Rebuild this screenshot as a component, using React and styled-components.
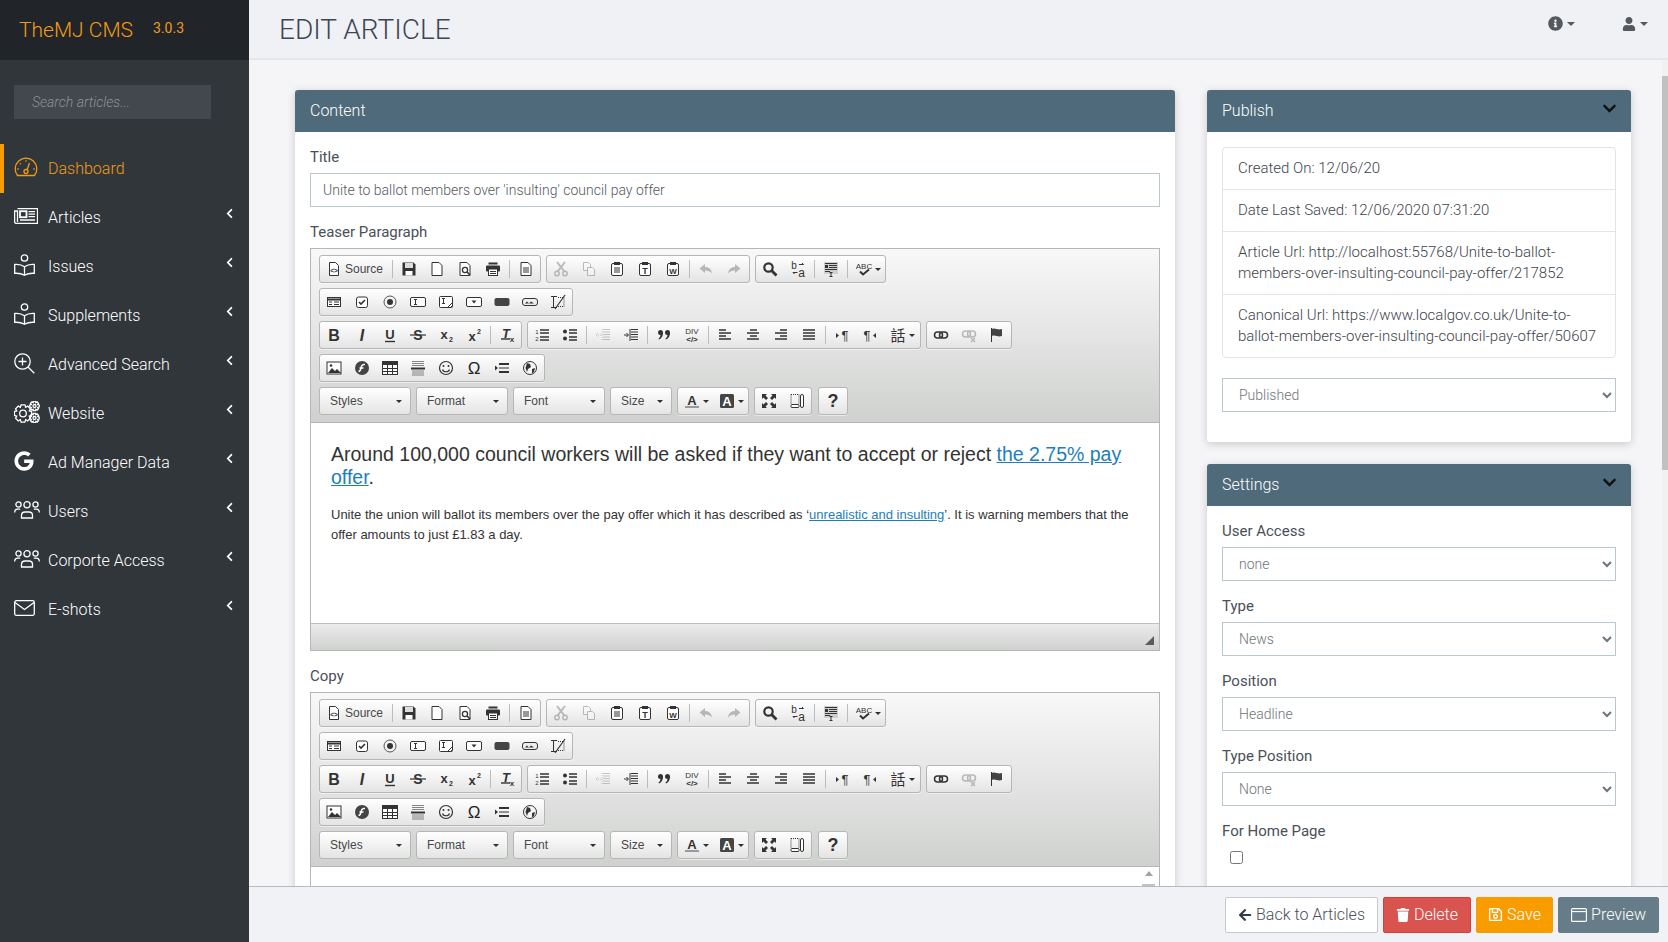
import React from "react";
import styled, { createGlobalStyle } from "styled-components";
import { FaChevronLeft, FaChevronDown, FaGoogle, FaInfoCircle, FaUser, FaArrowLeft, FaTrash, FaRegSave } from "react-icons/fa";

const GlobalStyle = createGlobalStyle`
  html, body { margin: 0; height: 100%; overflow: hidden; }
  body { font-family: Roboto, "Liberation Sans", sans-serif; background: #f5f5f8; color: #495057; }
  * { box-sizing: border-box; }
`;

const gearPath = (cx, cy, outer, inner, teeth) => {
  const step = (Math.PI * 2) / teeth;
  const pts = [];
  for (let t = 0; t < teeth; t++) {
    const a = t * step;
    [[inner, -0.5], [outer, -0.28], [outer, 0.28], [inner, 0.5]].forEach(([r, f]) => {
      pts.push(`${(cx + r * Math.cos(a + f * step)).toFixed(2)} ${(cy + r * Math.sin(a + f * step)).toFixed(2)}`);
    });
  }
  return `M${pts.join("L")}Z`;
};

const NavSvg = styled.svg`
  display: block;
  fill: none;
  stroke: currentColor;
  stroke-width: 1.3;
`;

const Gauge = () => (
  <NavSvg width="24" height="20" viewBox="0 0 24 20">
    <path d="M3.500 18.500A10.800 10.800 0 1 1 20.500 18.500Z" />
    <circle cx="12" cy="14.500" r="2" />
    <path d="M13 13l2.500-7" />
    <path d="M12 3.500v1M6 6.500l.7.7M3.500 12h1M19.500 12h1" strokeWidth="1.800" />
  </NavSvg>
);
const Newspaper = () => (
  <NavSvg width="24" height="16" viewBox="0 0 24 16">
    <path d="M3.500.7h20v14.600H2C1 15.300.6 14.500.6 13.500V3h2.900v11" />
    <rect x="6" y="3.200" width="6.500" height="6" strokeWidth="1.800" />
    <path d="M14.500 3.700h6.500M14.500 6.200h6.500M14.500 8.700h6.500M6 12h15" />
  </NavSvg>
);
const BookReader = () => (
  <NavSvg width="21" height="22" viewBox="0 0 21 22">
    <circle cx="10.500" cy="4" r="3.200" />
    <path d="M.7 10.500c3.500-.3 7 .2 9.800 2.300 2.800-2.100 6.300-2.600 9.800-2.300v8.800c-3.500-.2-7 .3-9.800 2-2.800-1.700-6.300-2.200-9.800-2zM10.500 12.800v8.500" />
  </NavSvg>
);
const SearchPlus = () => (
  <NavSvg width="21" height="21" viewBox="0 0 21 21">
    <circle cx="8.500" cy="8.500" r="7.700" />
    <path d="M8.500 4.500v8M4.500 8.500h8M14 14l6.300 6.300" />
  </NavSvg>
);
const Cogs = () => (
  <NavSvg width="26" height="22" viewBox="0 0 26 22" strokeWidth="1.200">
    <path d={gearPath(9, 12.500, 8.800, 6.800, 8)} />
    <circle cx="9" cy="12.500" r="3.300" />
    <path d={gearPath(20.500, 5, 4.800, 3.500, 8)} />
    <circle cx="20.500" cy="5" r="1.500" />
    <path d={gearPath(20.500, 17, 4.800, 3.500, 8)} />
    <circle cx="20.500" cy="17" r="1.500" />
  </NavSvg>
);
const Users = () => (
  <NavSvg width="26" height="18" viewBox="0 0 26 18">
    <circle cx="4.500" cy="3.500" r="2.600" />
    <circle cx="13" cy="3.800" r="3.100" />
    <circle cx="21.500" cy="3.500" r="2.600" />
    <path d="M7.500 17v-2.500c0-2 1.500-3.500 3.500-3.500h4c2 0 3.500 1.500 3.500 3.500V17zM.7 11.500c0-2 1.300-3.300 3-3.300h2.500M25.300 11.500c0-2-1.300-3.300-3-3.300h-2.500" />
  </NavSvg>
);
const Mail = () => (
  <NavSvg width="21" height="16" viewBox="0 0 21 16">
    <rect x=".7" y=".7" width="19.600" height="14.600" rx="1.500" />
    <path d="M1 2.500l9.500 7 9.500-7" />
  </NavSvg>
);
const Google = () => <FaGoogle size={20} />;

const navItems = [
  { label: "Dashboard", icon: Gauge, active: true },
  { label: "Articles", icon: Newspaper },
  { label: "Issues", icon: BookReader },
  { label: "Supplements", icon: BookReader },
  { label: "Advanced Search", icon: SearchPlus },
  { label: "Website", icon: Cogs },
  { label: "Ad Manager Data", icon: Google },
  { label: "Users", icon: Users },
  { label: "Corporte Access", icon: Users },
  { label: "E-shots", icon: Mail },
];

const Shell = styled.div`
  display: flex;
  height: 100vh;
`;

const Sidebar = styled.aside`
  width: 249px;
  flex-shrink: 0;
  background: #31363b;
`;

const Brand = styled.div`
  height: 60px;
  background: #212529;
  color: #f39c12;
  display: flex;
  align-items: center;
  padding-left: 19px;
  font-size: 21px;
  font-weight: 300;
  span {
    font-size: 14px;
    margin-left: 20px;
    margin-bottom: 4px;
    font-weight: 400;
  }
`;

const SearchWrap = styled.div`
  padding: 25px 14px;
`;

const SearchInput = styled.input`
  width: 197px;
  height: 34px;
  border: 0;
  background: #43474e;
  padding: 0 18px;
  font: italic 300 14px Roboto, sans-serif;
  color: #ccc;
  outline: 0;
  &::placeholder { color: #8f9399; opacity: 1; }
`;

const NavItem = styled.div`
  height: 49px;
  display: flex;
  align-items: center;
  padding-left: 14px;
  font-size: 16px;
  font-weight: 300;
  color: ${(p) => (p.$active ? "#f39c12" : "#fff")};
  box-shadow: ${(p) => (p.$active ? "inset 4px 0 0 #f89c00" : "none")};
`;

const NavIcon = styled.span`
  width: 34px;
  display: flex;
  align-items: center;
  margin-bottom: 3px;
`;

const NavLabel = styled.span`
  flex: 1;
`;

const NavCaret = styled.span`
  margin-right: 14px;
  margin-bottom: 8px;
  display: flex;
`;

const Main = styled.div`
  flex: 1;
  min-width: 0;
  display: flex;
  flex-direction: column;
`;

const TopBar = styled.header`
  height: 60px;
  flex-shrink: 0;
  background: #f0f1f5;
  border-bottom: 2px solid #e6e7eb;
  display: flex;
  align-items: center;
  padding-left: 30px;
`;

const PageTitle = styled.h1`
  margin: 0;
  flex: 1;
  font-size: 28px;
  font-weight: 300;
  color: #3c4654;
  text-transform: uppercase;
`;

const TopAction = styled.div`
  display: flex;
  align-items: center;
  gap: 4px;
  color: #55595e;
  margin-right: ${(p) => p.$mr}px;
  margin-bottom: 11px;
`;

const Caret = styled.span`
  width: 0;
  height: 0;
  border-left: 4.5px solid transparent;
  border-right: 4.5px solid transparent;
  border-top: 4.5px solid currentColor;
`;

const Scroller = styled.div`
  flex: 1;
  min-height: 0;
  overflow: hidden;
  position: relative;
  display: grid;
  grid-template-columns: 880px 424px;
  column-gap: 32px;
  align-items: start;
  padding: 30px 0 0 46px;
`;

const ScrollTrack = styled.div`
  position: absolute;
  top: 0;
  right: 0;
  bottom: 0;
  width: 6px;
  background: #f1f1f1;
`;

const ScrollThumb = styled.div`
  margin-top: 16px;
  height: 394px;
  background: #c1c1c1;
`;

const Column = styled.div`
  display: flex;
  flex-direction: column;
  gap: 22px;
`;

const Card = styled.section`
  background: #fff;
  border-radius: 3px;
  box-shadow: 0 2px 8px rgba(0, 0, 0, 0.18);
`;

const CardHead = styled.div`
  height: 42px;
  background: #4e6a7b;
  border-radius: 3px 3px 0 0;
  color: #fff;
  font-size: 16px;
  font-weight: 300;
  padding: 0 15px 2px;
  display: flex;
  align-items: center;
  justify-content: space-between;
  svg { color: #111; margin-bottom: 4px; margin-right: -1px; }
`;

const CardBody = styled.div`
  padding: 15px;
  padding-bottom: ${(p) => p.$pb ?? 15}px;
`;

const Label = styled.label`
  display: block;
  font-size: 15px;
  line-height: 21px;
  color: #495057;
  margin-bottom: 5px;
`;

const Field = styled.div`
  margin-bottom: 15px;
`;

const TextInput = styled.input`
  display: block;
  width: 100%;
  height: 34px;
  border: 1px solid #b9c8ce;
  padding: 0 12px;
  font: 300 14px Roboto, sans-serif;
  color: #55595e;
  outline: 0;
`;

const Select = styled.select`
  display: block;
  width: 100%;
  height: 34px;
  border: 1px solid #b9c8ce;
  border-radius: 0;
  background: #fff;
  padding: 0 12px;
  font: 300 14px Roboto, sans-serif;
  color: #6f7479;
  outline: 0;
`;

const Check = styled.input`
  display: block;
  margin: 9px 0 0 8px;
  width: 13px;
  height: 13px;
`;

const InfoList = styled.div`
  border: 1px solid #e2e4e8;
  border-radius: 4px;
  margin-bottom: 20px;
`;

const InfoRow = styled.div`
  padding: 10px 15px;
  font-size: 15px;
  font-weight: 300;
  line-height: 21px;
  color: #3d444b;
  border-top: ${(p) => (p.$first ? "0" : "1px solid #e2e4e8")};
`;

const Footer = styled.footer`
  height: 56px;
  flex-shrink: 0;
  background: #f1f2f6;
  border-top: 1px solid #b9b9c6;
  display: flex;
  align-items: center;
  justify-content: flex-end;
  gap: 5px;
  padding: 0 9px 0 0;
`;

const ActionButton = styled.button`
  width: ${(p) => p.$w}px;
  height: 36px;
  border: 1px solid ${(p) => p.$border};
  border-radius: 2px;
  background: ${(p) => p.$bg};
  color: ${(p) => p.$color};
  font: 300 16px Roboto, sans-serif;
  padding: 0;
  display: flex;
  align-items: center;
  justify-content: center;
  gap: 4px;
`;

const WindowIcon = () => (
  <svg width="16" height="14" viewBox="0 0 16 14" fill="none" stroke="currentColor" strokeWidth="1.100">
    <rect x=".6" y=".6" width="14.800" height="12.800" rx="1" />
    <path d="M.6 3.600h14.800" />
  </svg>
);

/* ---- editor ---- */

const Editor = styled.div`
  border: 1px solid #b6b6b6;
  border-bottom-color: ${(p) => (p.$open ? "transparent" : "#b6b6b6")};
  margin-bottom: 15px;
`;

const Toolbar = styled.div`
  background: linear-gradient(#f8f8f8, #cfd1cf);
  border-bottom: 1px solid #b6b6b6;
  padding: 6px 8px 7px;
  display: flex;
  flex-direction: column;
  gap: 5px;
`;

const ToolRow = styled.div`
  display: flex;
  gap: 5px;
`;

const ToolGroup = styled.div`
  display: flex;
  align-items: center;
  height: 28px;
  margin-left: ${(p) => p.$ml || 0}px;
  border: 1px solid #b6b6b6;
  border-radius: 3px;
  background: linear-gradient(#fff, #e4e4e4);
  box-shadow: 0 1px 0 rgba(255, 255, 255, 0.5);
`;

const ToolBtn = styled.span`
  width: ${(p) => p.$w || 28}px;
  height: 26px;
  display: flex;
  align-items: center;
  padding-left: 6px;
  opacity: ${(p) => (p.$off ? 0.3 : 1)};
  font: 12px "Liberation Sans", Arial, sans-serif;
  color: #484848;
  gap: 3px;
  svg { flex-shrink: 0; display: block; }
`;

const ToolSep = styled.span`
  width: 1px;
  height: 18px;
  margin: 0 2px;
  background: #bcbcbc;
`;

const Combo = styled.span`
  width: ${(p) => p.$w}px;
  height: 28px;
  display: flex;
  align-items: center;
  justify-content: space-between;
  padding: 0 8px 0 10px;
  border: 1px solid #b6b6b6;
  border-radius: 3px;
  background: linear-gradient(#fff, #e4e4e4);
  font: 12px "Liberation Sans", Arial, sans-serif;
  color: #484848;
`;

const MiniCaret = styled.span`
  width: 0;
  height: 0;
  border-left: 3px solid transparent;
  border-right: 3px solid transparent;
  border-top: 3px solid #2f2f2f;
`;

const Contents = styled.div`
  height: 200px;
  background: #fff;
  padding: 20px 20px 0;
  font-family: "Liberation Sans", Arial, sans-serif;
  color: #333;
  a { color: #1c7ebb; text-decoration: underline; }
`;

const Lead = styled.p`
  margin: 0 0 16px;
  font-size: 19.5px;
  line-height: 23px;
`;

const Body = styled.p`
  margin: 0;
  font-size: 13px;
  line-height: 20px;
`;

const EditorBottom = styled.div`
  height: 27px;
  background: linear-gradient(#ebebeb, #cfd1cf);
  border-top: 1px solid #bfbfbf;
  display: flex;
  justify-content: flex-end;
  align-items: flex-end;
  padding: 0 5px 5px 0;
`;

const ResizeGrip = styled.span`
  width: 0;
  height: 0;
  border-left: 9px solid transparent;
  border-bottom: 9px solid #5c5c5c;
`;

const ClippedContents = styled.div`
  height: 60px;
  background: #fff;
  display: flex;
  justify-content: flex-end;
  padding: 4px 3px 0 0;
`;

const EditorScroll = styled.div`
  width: 15px;
  display: flex;
  flex-direction: column;
  align-items: center;
  gap: 8px;
  i {
    width: 0;
    height: 0;
    border-left: 4px solid transparent;
    border-right: 4px solid transparent;
    border-bottom: 5px solid #a3a3a3;
  }
  b { width: 13px; height: 40px; background: #c1c1c1; }
`;

const K = "#333";
const Glyph = ({ children }) => (
  <svg width="16" height="16" viewBox="0 0 16 16">{children}</svg>
);
const T = ({ x = 8, y = 13, s = 14, w = 700, i, f = K, c }) => (
  <text x={x} y={y} fontSize={s} fontWeight={w} fontStyle={i ? "italic" : "normal"} fill={f} textAnchor="middle" fontFamily="Liberation Sans, sans-serif">{c}</text>
);
const Lines = ({ rows, x = 2, w = 12, sw = 1.4, c = K }) => (
  <path d={rows.map((r) => `M${r[1] ?? x} ${r[0]}h${r[2] ?? w}`).join("")} stroke={c} strokeWidth={sw} fill="none" />
);
const Page = () => <path d="M3.5 1.5h6l3 3v10h-9z" fill="#fff" stroke={K} />;
const Clip = () => (
  <>
    <rect x="2.5" y="2.5" width="11" height="12" rx="1.5" fill="#fff" stroke={K} />
    <rect x="5" y="1" width="6" height="3" fill={K} />
  </>
);
const QuoteMark = ({ x }) => (
  <g transform={`translate(${x} 0)`} fill={K}>
    <circle cx="2.500" cy="5.500" r="2.500" />
    <path d="M5 5.500c0 3.500-1.500 6-4 7l-.5-1c1.500-1 2-2.500 2-4z" />
  </g>
);

const icons = {
  source: <Glyph><Page /><T y={11.5} s={6.5} c="<>" /></Glyph>,
  save: <Glyph><path d="M1.5 1.5h11l2 2v11h-13z" fill={K} /><rect x="4" y="2" width="8" height="5" fill="#ddd" /><rect x="4.5" y="10" width="7" height="4.5" fill="#fff" /></Glyph>,
  newpage: <Glyph><path d="M3 1.5h7l3 3v10H3z" fill="#fff" stroke={K} /></Glyph>,
  preview: <Glyph><path d="M3 1.5h7l3 3v10H3z" fill="#fff" stroke={K} /><circle cx="8" cy="9" r="2.6" fill="none" stroke={K} strokeWidth="1.3" /><path d="M10 11l3 3" stroke={K} strokeWidth="1.6" /></Glyph>,
  print: <Glyph><rect x="3.5" y="1.5" width="9" height="2" fill={K} /><rect x="1" y="4.5" width="14" height="6" rx="1" fill={K} /><rect x="3.5" y="8" width="9" height="6.5" fill="#fff" stroke={K} /><Lines rows={[[10.5, 5, 6], [12.5, 5, 6]]} sw={1} /></Glyph>,
  templates: <Glyph><path d="M3 1.5h7l3 3v10H3z" fill="#fff" stroke={K} /><Lines rows={[[7, 5, 6], [9, 5, 6], [11, 5, 6]]} sw={1} /></Glyph>,
  cut: <Glyph><path d="M4 1l7 9M12 1l-7 9" stroke={K} strokeWidth="2" /><circle cx="4" cy="12.5" r="2.2" fill="none" stroke={K} strokeWidth="1.4" /><circle cx="12" cy="12.5" r="2.2" fill="none" stroke={K} strokeWidth="1.4" /></Glyph>,
  copy: <Glyph><path d="M2.5 1.5h5l2 2v6h-7z" fill="#fff" stroke={K} /><path d="M6.5 6.5h5l2 2v6h-7z" fill="#fff" stroke={K} /></Glyph>,
  paste: <Glyph><Clip /><Lines rows={[[7, 5, 6], [9, 5, 6], [11, 5, 6]]} sw={1} /></Glyph>,
  pastetext: <Glyph><Clip /><T y={13} s={9} c="T" /></Glyph>,
  pasteword: <Glyph><Clip /><T y={13} s={8} c="W" /></Glyph>,
  undo: <Glyph><path d="M7 3L1.5 7.5 7 12V9.5c3 0 5 .8 7 3-.5-4-3-6.500-7-6.500z" fill={K} /></Glyph>,
  redo: <Glyph><path d="M9 3l5.500 4.500L9 12V9.500c-3 0-5 .8-7 3 .5-4 3-6.500 7-6.500z" fill={K} /></Glyph>,
  find: <Glyph><circle cx="6.500" cy="6.500" r="4.200" fill="none" stroke={K} strokeWidth="2.200" /><path d="M9.500 9.500l5 5" stroke={K} strokeWidth="2.800" /></Glyph>,
  replace: <Glyph><T x={4} y={8} s={10} w={400} c="b" /><T x={11.500} y={15.500} s={12} w={400} c="a" /><path d="M9 3.500h4.500l-1.500-1.500M7.500 11.500H3l1.500 1.500" stroke={K} fill="none" /></Glyph>,
  selectall: <Glyph><rect x="1" y="1" width="14" height="12" fill="#d0d0d0" /><Lines rows={[[2.500, 2, 12], [4.500, 6, 8], [6.500, 6, 8], [8.500, 2, 12], [10.500, 2, 5]]} sw={1} /><rect x="2" y="4" width="3" height="3" fill={K} /><path d="M8 11.500v4M6.500 11.500h3M6.500 15.500h3" stroke={K} /></Glyph>,
  spell: <Glyph><T y={7.500} s={8} w={400} c="ABC" /><path d="M4 10.500l3 3 6-5" stroke={K} strokeWidth="2" fill="none" /></Glyph>,
  form: <Glyph><rect x="1.500" y="3.500" width="13" height="9" fill="#fff" stroke={K} /><Lines rows={[[5.500, 1.500, 13]]} sw={2} /><Lines rows={[[8, 3, 3], [8, 8, 5], [10.500, 3, 3], [10.500, 8, 5]]} sw={1.100} /></Glyph>,
  checkbox: <Glyph><rect x="2.500" y="3" width="11" height="10.500" rx="2" fill="#fff" stroke={K} /><path d="M5 8l2 2 4-4" stroke={K} strokeWidth="1.600" fill="none" /></Glyph>,
  radio: <Glyph><circle cx="8" cy="8" r="6" fill="#f4f4f4" stroke="#555" /><circle cx="8" cy="8" r="3" fill={K} /></Glyph>,
  textfield: <Glyph><rect x="0.500" y="3.500" width="15" height="9" rx="1.500" fill="#fff" stroke={K} /><path d="M4 5.500h3M5.500 5.500v5M4 10.500h3" stroke={K} /></Glyph>,
  textarea: <Glyph><rect x="1.500" y="2.500" width="13" height="11" rx="1" fill="#fff" stroke={K} /><path d="M4 4.500h3M5.500 4.500v5M4 9.500h3M14 9l-5 5M14 12l-2 2" stroke={K} /></Glyph>,
  select: <Glyph><rect x="0.500" y="3.500" width="15" height="9" rx="1.500" fill="#fff" stroke={K} /><path d="M5.500 6.500h5l-2.500 3z" fill={K} /></Glyph>,
  button: <Glyph><rect x="0.500" y="4" width="15" height="8" rx="2" fill="#444" /></Glyph>,
  imagebutton: <Glyph><rect x="0.500" y="4.500" width="15" height="7" rx="2.500" fill="#eee" stroke={K} /><path d="M3 9.500l2-2 2 2 2-2 3 2z" fill={K} /></Glyph>,
  hidden: <Glyph><path d="M1 2.500h6M1 13.500h6M3.500 3v10" stroke={K} /><path d="M15 1L5 15" stroke={K} strokeWidth="1.200" /><path d="M8 3.500h6v9H8" stroke={K} strokeDasharray="1 1" fill="none" /></Glyph>,
  bold: <Glyph><T s={16} y={13.500} c="B" /></Glyph>,
  italic: <Glyph><T s={16} y={13.500} i c="I" /></Glyph>,
  underline: <Glyph><T y={12} s={13} c="U" /><Lines rows={[[14.500, 3, 10]]} /></Glyph>,
  strike: <Glyph><T y={13} s={14} c="S" /><Lines rows={[[8, 0, 16]]} sw={1.200} /></Glyph>,
  sub: <Glyph><T x={6} y={12} s={13} c="x" /><T x={13} y={15} s={7} c="2" /></Glyph>,
  sup: <Glyph><T x={6} y={14} s={13} c="x" /><T x={13} y={7} s={7} c="2" /></Glyph>,
  removefmt: <Glyph><T x={7} y={11} s={13} i c="T" /><Lines rows={[[12, 2, 9]]} /><T x={13} y={15} s={8} c="x" /></Glyph>,
  ol: <Glyph><T x={3} y={7} s={6} w={400} c="1" /><T x={3} y={14} s={6} w={400} c="2" /><Lines rows={[[3, 6, 9], [6, 6, 9], [10, 6, 9], [13, 6, 9]]} sw={1.300} /></Glyph>,
  ul: <Glyph><circle cx="3" cy="4.500" r="2" fill={K} /><circle cx="3" cy="11.500" r="2" fill={K} /><Lines rows={[[3, 7, 8], [6, 7, 8], [10, 7, 8], [13, 7, 8]]} sw={1.300} /></Glyph>,
  outdent: <Glyph><Lines rows={[[2.500, 8, 7], [5, 8, 7], [7.500, 8, 7], [10, 8, 7], [12.500, 8, 7]]} sw={1} c="#555" /><path d="M6 8H1M3 6L1 8l2 2M7 2v12" stroke="#555" fill="none" strokeDasharray="1 1" /></Glyph>,
  indent: <Glyph><Lines rows={[[2.500, 8, 7], [5, 8, 7], [7.500, 8, 7], [10, 8, 7], [12.500, 8, 7]]} sw={1} /><path d="M1 8h4M3.500 6L5.500 8l-2 2M7 2v12" stroke={K} fill="none" /></Glyph>,
  quote: <Glyph><QuoteMark x={2} /><QuoteMark x={9} /></Glyph>,
  div: <Glyph><T y={7} s={8} w={400} c="DIV" /><T y={14.500} s={8} c="</>" /></Glyph>,
  left: <Glyph><Lines rows={[[3, 2, 7], [6, 2, 12], [9, 2, 7], [12, 2, 12]]} sw={1.500} /></Glyph>,
  center: <Glyph><Lines rows={[[3, 5, 7], [6, 2, 12], [9, 5, 7], [12, 2, 12]]} sw={1.500} /></Glyph>,
  right: <Glyph><Lines rows={[[3, 7, 7], [6, 2, 12], [9, 7, 7], [12, 2, 12]]} sw={1.500} /></Glyph>,
  justify: <Glyph><Lines rows={[[3], [6], [9], [12]]} sw={1.500} /></Glyph>,
  ltr: <Glyph><path d="M2 6l3 2.500L2 11z" fill={K} /><T x={11} y={13} s={13} w={400} c="¶" /></Glyph>,
  rtl: <Glyph><path d="M14 6l-3 2.500 3 2.500z" fill={K} /><T x={5} y={13} s={13} w={400} c="¶" /></Glyph>,
  lang: <Glyph><text x="8" y="13.500" fontSize="15" textAnchor="middle" fill={K} fontFamily="Noto Sans CJK TC, sans-serif">話</text></Glyph>,
  link: <Glyph><rect x="1.500" y="5" width="8" height="6" rx="3" fill="none" stroke={K} strokeWidth="1.500" /><rect x="6.500" y="5" width="8" height="6" rx="3" fill="none" stroke={K} strokeWidth="1.500" /></Glyph>,
  unlink: <Glyph><rect x="1.500" y="4" width="8" height="6" rx="3" fill="none" stroke={K} strokeWidth="1.500" /><rect x="6.500" y="4" width="8" height="6" rx="3" fill="none" stroke={K} strokeWidth="1.500" /><path d="M10 11l4 4M14 11l-4 4" stroke={K} strokeWidth="1.300" /></Glyph>,
  anchor: <Glyph><path d="M2.500 1v14" stroke={K} /><path d="M3 2c3-1.500 6 1.500 10 0v7c-4 1.500-7-1.500-10 0z" fill="#444" /></Glyph>,
  image: <Glyph><rect x="1" y="2" width="14" height="12" fill="#fff" stroke={K} /><path d="M2 13l4-5 3 3 2-2 4 4z" fill={K} /><circle cx="5" cy="5.500" r="1.300" fill={K} /></Glyph>,
  flash: <Glyph><circle cx="8" cy="8" r="7" fill="#444" /><path d="M11 4.500c-3-.5-3.500 1-4 3.500S5.500 11.500 4.500 11.500M5.500 8h4" stroke="#fff" strokeWidth="1.500" fill="none" /></Glyph>,
  table: <Glyph><rect x="0.500" y="1.500" width="15" height="13" fill="#fff" stroke={K} /><rect x="1" y="2" width="14" height="3" fill={K} /><path d="M5.500 5v9M10.500 5v9M1 8.500h14M1 11.500h14" stroke={K} /></Glyph>,
  hr: <Glyph><Lines rows={[[1.500, 2, 12], [3.500, 2, 12], [5.500, 2, 12], [11, 2, 12], [13, 2, 12], [15, 2, 12]]} sw={0.800} c="#666" /><Lines rows={[[8.500, 1, 14]]} sw={2} /></Glyph>,
  smiley: <Glyph><circle cx="8" cy="8" r="6.500" fill="#f5f5f5" stroke={K} strokeWidth="1.200" /><circle cx="5.500" cy="6" r="1" fill={K} /><circle cx="10.500" cy="6" r="1" fill={K} /><path d="M4.500 9.500c1 3 6 3 7 0" stroke={K} fill="none" strokeWidth="1.200" /></Glyph>,
  omega: <Glyph><T y={14} s={17} w={400} f="#222" c="Ω" /></Glyph>,
  pagebreak: <Glyph><path d="M1 5.500l3 2.500-3 2.500z" fill={K} /><Lines rows={[[4, 5, 10], [12, 5, 10]]} sw={2} /><Lines rows={[[8, 5, 10]]} sw={1} /></Glyph>,
  iframe: <Glyph><circle cx="8" cy="8" r="6.500" fill="#f5f5f5" stroke={K} /><path d="M5 3l3 1 1 3-3 2-1 3-1.500-4zM10 9l3-1-1 4-2 1.500z" fill={K} /></Glyph>,
  textcolor: <Glyph><T y={11.500} s={13} c="A" /><Lines rows={[[14, 1, 14]]} sw={2} c="#999" /></Glyph>,
  bgcolor: <Glyph><rect x="1" y="1" width="14" height="14" rx="1.500" fill="#444" /><T y={13} s={13} f="#fff" c="A" /></Glyph>,
  maximize: <Glyph><path d="M1 1h5L4.500 2.500 7 5 5 7 2.500 4.500 1 6zM15 1v5l-1.500-1.500L11 7 9 5l2.500-2.500L10 1zM1 15v-5l1.500 1.500L5 9l2 2-2.500 2.500L6 15zM15 15h-5l1.500-1.500L9 11l2-2 2.500 2.500L15 10z" fill={K} /></Glyph>,
  blocks: <Glyph><path d="M2 1.500h8v9" stroke={K} fill="none" strokeDasharray="1 1" /><path d="M2 1.500v9" stroke={K} strokeDasharray="1 1" /><rect x="2" y="11.500" width="8" height="3" rx="1" fill="#fff" stroke={K} /><rect x="11.500" y="1.500" width="3" height="13" rx="1.500" fill="#fff" stroke={K} /></Glyph>,
  help: <Glyph><T y={14} s={18} c="?" /></Glyph>,
};

const toolRows = [
  [
    [{ k: "source", text: "Source", w: 70 }, "|", "save", "newpage", "preview", "print", "|", "templates"],
    ["-cut", "-copy", "paste", "pastetext", "pasteword", "|", "-undo", { k: "redo", off: true, w: 29 }],
    ["find", "replace", "|", "selectall", "|", { k: "spell", caret: true }],
  ],
  [["form", "checkbox", "radio", "textfield", "textarea", "select", "button", "imagebutton", "hidden"]],
  [
    ["bold", "italic", "underline", "strike", "sub", "sup", "|", "removefmt"],
    ["ol", "ul", "|", "-outdent", "indent", "|", "quote", "div", "|", "left", "center", "right", "justify", "|", "ltr", "rtl", { k: "lang", caret: true, w: 36 }],
    ["link", "-unlink", "anchor"],
  ],
  [["image", "flash", "table", "hr", "smiley", "omega", "pagebreak", "iframe"]],
];

const combos = [["Styles", 92], ["Format", 92], ["Font", 92], ["Size", 62]];

function Tool({ item }) {
  if (item === "|") return <ToolSep />;
  if (typeof item === "string") {
    const off = item[0] === "-";
    const key = off ? item.slice(1) : item;
    return <ToolBtn $off={off}>{icons[key]}</ToolBtn>;
  }
  return (
    <ToolBtn $w={item.w || 35} $off={item.off}>
      {icons[item.k]}
      {item.text}
      {item.caret && <MiniCaret />}
    </ToolBtn>
  );
}

function EditorToolbar() {
  return (
    <Toolbar>
      {toolRows.map((row, r) => (
        <ToolRow key={r}>
          {row.map((group, g) => (
            <ToolGroup key={g}>
              {group.map((item, i) => <Tool key={i} item={item} />)}
            </ToolGroup>
          ))}
        </ToolRow>
      ))}
      <ToolRow>
        {combos.map(([name, w]) => (
          <Combo key={name} $w={w}>{name}<MiniCaret /></Combo>
        ))}
        <ToolGroup>
          <Tool item={{ k: "textcolor", caret: true }} />
          <Tool item={{ k: "bgcolor", caret: true }} />
        </ToolGroup>
        <ToolGroup>
          <Tool item="maximize" />
          <Tool item="blocks" />
        </ToolGroup>
        <ToolGroup $ml={1}>
          <Tool item="help" />
        </ToolGroup>
      </ToolRow>
    </Toolbar>
  );
}

function SelectField({ label, value }) {
  return (
    <Field>
      <Label>{label}</Label>
      <Select defaultValue={value}><option>{value}</option></Select>
    </Field>
  );
}

export default function App() {
  return (
    <Shell>
      <GlobalStyle />
      <Sidebar>
        <Brand>TheMJ CMS<span>3.0.3</span></Brand>
        <SearchWrap>
          <SearchInput placeholder="Search articles..." />
        </SearchWrap>
        <nav>
          {navItems.map((item) => (
            <NavItem key={item.label} $active={item.active}>
              <NavIcon><item.icon /></NavIcon>
              <NavLabel>{item.label}</NavLabel>
              {!item.active && <NavCaret><FaChevronLeft size={11} /></NavCaret>}
            </NavItem>
          ))}
        </nav>
      </Sidebar>
      <Main>
        <TopBar>
          <PageTitle>Edit Article</PageTitle>
          <TopAction $mr={47}><FaInfoCircle size={15} /><Caret /></TopAction>
          <TopAction $mr={20}><FaUser size={14} /><Caret /></TopAction>
        </TopBar>
        <Scroller>
          <Card>
            <CardHead>Content</CardHead>
            <CardBody>
              <Field>
                <Label>Title</Label>
                <TextInput readOnly value="Unite to ballot members over 'insulting' council pay offer" />
              </Field>
              <Label>Teaser Paragraph</Label>
              <Editor>
                <EditorToolbar />
                <Contents>
                  <Lead>
                    Around 100,000 council workers will be asked if they want to accept or reject <a href="#a">the 2.75% pay offer</a>.
                  </Lead>
                  <Body>
                    Unite the union will ballot its members over the pay offer which it has described as ‘<a href="#b">unrealistic and insulting</a>’. It is warning members that the offer amounts to just £1.83 a day.
                  </Body>
                </Contents>
                <EditorBottom><ResizeGrip /></EditorBottom>
              </Editor>
              <Label>Copy</Label>
              <Editor $open>
                <EditorToolbar />
                <ClippedContents>
                  <EditorScroll><i /><b /></EditorScroll>
                </ClippedContents>
              </Editor>
            </CardBody>
          </Card>
          <Column>
            <Card>
              <CardHead>Publish<FaChevronDown size={15} /></CardHead>
              <CardBody $pb={30}>
                <InfoList>
                  <InfoRow $first>Created On: 12/06/20</InfoRow>
                  <InfoRow>Date Last Saved: 12/06/2020 07:31:20</InfoRow>
                  <InfoRow>Article Url: http://localhost:55768/Unite-to-ballot-members-over-insulting-council-pay-offer/217852</InfoRow>
                  <InfoRow>Canonical Url: https://www.localgov.co.uk/Unite-to-ballot-members-over-insulting-council-pay-offer/50607</InfoRow>
                </InfoList>
                <Select defaultValue="Published"><option>Published</option></Select>
              </CardBody>
            </Card>
            <Card>
              <CardHead>Settings<FaChevronDown size={15} /></CardHead>
              <CardBody>
                <SelectField label="User Access" value="none" />
                <SelectField label="Type" value="News" />
                <SelectField label="Position" value="Headline" />
                <SelectField label="Type Position" value="None" />
                <Field>
                  <Label>For Home Page</Label>
                  <Check type="checkbox" />
                </Field>
              </CardBody>
            </Card>
          </Column>
          <ScrollTrack><ScrollThumb /></ScrollTrack>
        </Scroller>
        <Footer>
          <ActionButton $w={153} $bg="#fff" $color="#495057" $border="#c8c9cc"><FaArrowLeft size={14} color="#333b46" />Back to Articles</ActionButton>
          <ActionButton $w={88} $bg="#d9534f" $color="#fff" $border="#d43f3a"><FaTrash size={14} />Delete</ActionButton>
          <ActionButton $w={77} $bg="#f89c00" $color="#fff" $border="#f89c00"><FaRegSave size={15} />Save</ActionButton>
          <ActionButton $w={101} $bg="#667d89" $color="#fff" $border="#667d89"><WindowIcon />Preview</ActionButton>
        </Footer>
      </Main>
    </Shell>
  );
}
